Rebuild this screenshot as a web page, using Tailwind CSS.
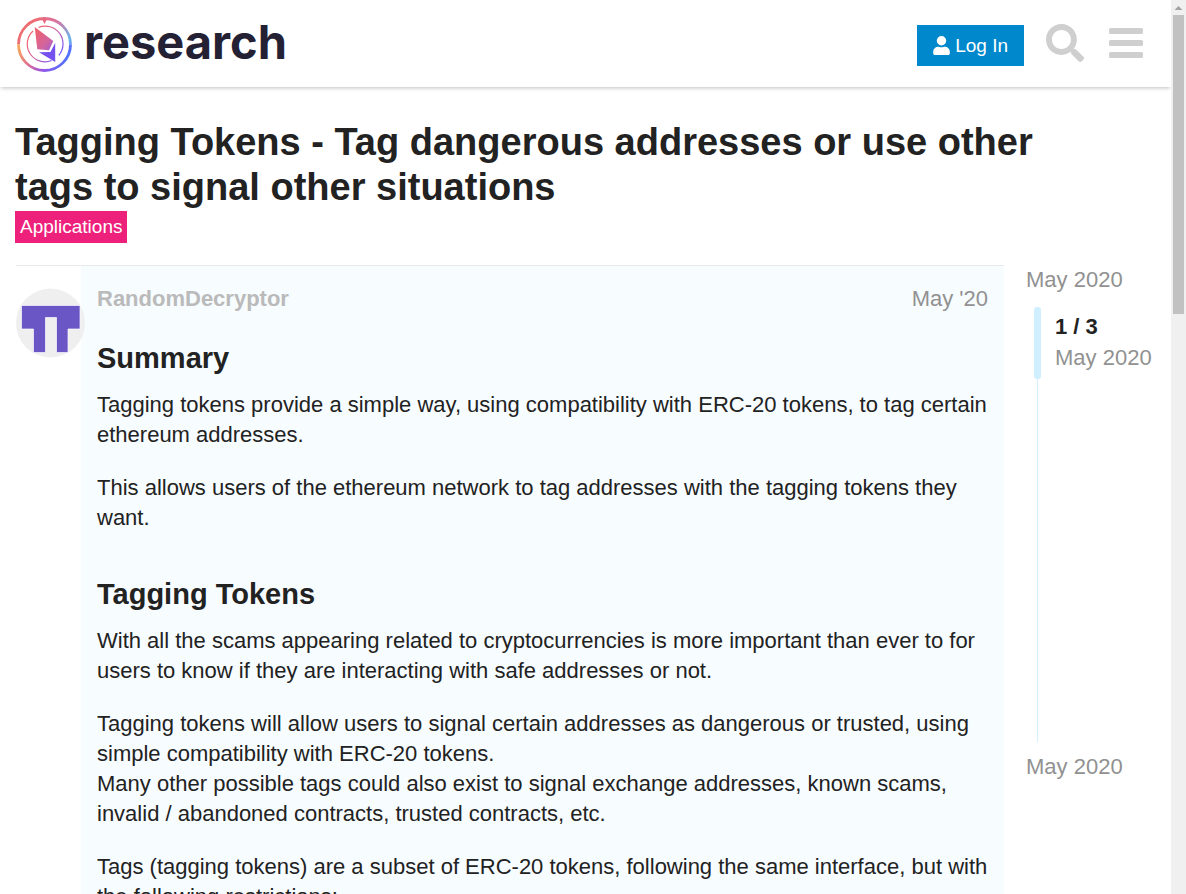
<!DOCTYPE html>
<html lang="en">
<head>
<meta charset="utf-8">
<meta name="viewport" content="width=device-width, initial-scale=1">
<title>Tagging Tokens - research</title>
<script src="https://cdn.jsdelivr.net/npm/@tailwindcss/browser@4"></script>
</head>
<body class="flex h-screen overflow-hidden bg-white font-['Liberation_Sans',Arial,sans-serif] text-[22px] leading-[30px] text-[#222222]">
<div class="min-w-0 flex-1 overflow-hidden">
  <header class="flex h-[87px] items-center justify-between pr-[27px] pl-4 shadow-[0_2px_4px_-1px_rgba(0,0,0,0.25)]">
    <a href="#" class="flex items-center gap-[11px] pt-px" aria-label="research">
      <svg class="size-[57px]" viewBox="0 0 57 57" fill="none" aria-hidden="true">
        <defs>
          <linearGradient id="ring" x1="6" y1="6" x2="52" y2="44" gradientUnits="userSpaceOnUse">
            <stop offset="0" stop-color="#f56a60"/><stop offset=".45" stop-color="#d873a2"/><stop offset=".8" stop-color="#69b5ec"/><stop offset="1" stop-color="#5d72ff"/>
          </linearGradient>
          <linearGradient id="low" x1="2" y1="28" x2="50" y2="48" gradientUnits="userSpaceOnUse">
            <stop offset="0" stop-color="#f7ae59"/><stop offset=".3" stop-color="#e5748b"/><stop offset=".62" stop-color="#9755e4"/><stop offset="1" stop-color="#4e73ff"/>
          </linearGradient>
          <linearGradient id="gem" x1="18" y1="17" x2="43" y2="38" gradientUnits="userSpaceOnUse">
            <stop offset="0" stop-color="#f0616d"/><stop offset=".5" stop-color="#d065a1"/><stop offset="1" stop-color="#7652fa"/>
          </linearGradient>
        </defs>
        <path d="M2.500 28.500a26 26 0 0 1 52 0" stroke="url(#ring)" stroke-width="2.800"/>
        <path d="M2.500 28.500a26 26 0 0 0 52 0" stroke="url(#low)" stroke-width="2.800"/>
        <path d="M26 3h5l-2.500 5z" fill="#e9647e"/>
        <path d="M22.500 11.500A17.700 17.700 0 0 1 42.800 39.300M35.500 44.500A17.700 17.700 0 0 1 17 15" stroke="url(#gem)" stroke-width="1.200"/>
        <path d="M18.700 11 37.300 25 33 34.300 21.300 33.300z" fill="url(#gem)"/>
        <path d="M23 36.300 34.500 36 39.200 26.700V46z" fill="#7552ef"/>
      </svg>
      <span class="pb-1 font-[Inter] text-[47px] leading-[56px] font-bold text-[#242135]">research</span>
    </a>
    <div class="flex items-center">
      <button class="mt-1 flex h-[41px] items-center gap-[5px] bg-[#0088cc] px-4 text-[19px] leading-6 text-white">
        <svg class="h-[19px] w-[17px]" viewBox="0 0 448 512" fill="currentColor" aria-hidden="true"><path d="M224 256a128 128 0 1 0 0-256 128 128 0 0 0 0 256zm89.600 32h-16.700a174 174 0 0 1-145.800 0h-16.700A134.400 134.400 0 0 0 0 422.400V464c0 26.500 21.500 48 48 48h352c26.500 0 48-21.500 48-48v-41.600A134.400 134.400 0 0 0 313.600 288z"/></svg>
        Log In
      </button>
      <button aria-label="Search" class="mb-0.5 ml-[22px] text-[#cfcfcf]">
        <svg class="size-[38px]" viewBox="0 0 512 512" fill="currentColor" aria-hidden="true"><path d="M505 442.700 405.300 343c-4.500-4.500-10.600-7-17-7H372c27.600-35.300 44-79.700 44-128C416 93.100 322.900 0 208 0S0 93.100 0 208s93.100 208 208 208c48.300 0 92.700-16.400 128-44v16.300c0 6.400 2.500 12.500 7 17l99.700 99.700c9.400 9.400 24.600 9.400 33.900 0l28.300-28.300c9.400-9.400 9.400-24.600.100-34zM208 336c-70.700 0-128-57.200-128-128 0-70.700 57.200-128 128-128 70.700 0 128 57.200 128 128 0 70.700-57.200 128-128 128z"/></svg>
      </button>
      <button aria-label="Menu" class="mb-0.5 ml-6 text-[#cfcfcf]">
        <svg class="h-[38px] w-[36px]" viewBox="0 0 36 38" fill="currentColor" aria-hidden="true"><rect x="1" y="4" width="34" height="6" rx="1.500"/><rect x="1" y="16" width="34" height="6" rx="1.500"/><rect x="1" y="28" width="34" height="6" rx="1.500"/></svg>
      </button>
    </div>
  </header>

  <main>
    <div class="px-[15px] pt-[33px] pb-[22px]">
      <h1 class="max-w-[1060px] text-[38px] leading-[45px] font-bold">Tagging Tokens - Tag dangerous addresses or use other tags to signal other situations</h1>
      <a href="#" class="mt-px flex h-8 w-fit items-center bg-[#ed207b] px-[5px] text-[19px] text-white">Applications</a>
    </div>
    <div class="flex pl-4">
      <article class="flex min-w-0 flex-1 border-t border-[#e9e9e9]">
        <div class="w-[65px] shrink-0 pt-[22px]">
          <svg class="relative size-[70px] max-w-none" viewBox="0 0 70 70" role="img" aria-label="RandomDecryptor avatar"><circle cx="34.500" cy="35" r="34.500" fill="#efefef"/><path d="M5.500 17.500h58.500V41H52v23.500H40.500V29.500h-11v35h-12V41h-12z" fill="#6a57c5" stroke="#faf9ff" stroke-width=".7"/></svg>
        </div>
        <div class="min-w-0 flex-1 bg-[#f7fcff] px-4 pt-[18px]">
          <div class="flex justify-between">
            <a href="#" class="font-bold text-[#bababa]">RandomDecryptor</a>
            <a href="#" class="text-[#919191]">May '20</a>
          </div>
          <h2 class="mt-[26px] text-[29px] leading-[36px] font-bold">Summary</h2>
          <p class="mt-[14px]">Tagging tokens provide a simple way, using compatibility with ERC-20 tokens, to tag certain ethereum addresses.</p>
          <p class="mt-[23px]">This allows users of the ethereum network to tag addresses with the tagging tokens they want.</p>
          <h2 class="mt-[43px] text-[29px] leading-[36px] font-bold">Tagging Tokens</h2>
          <p class="mt-[14px]">With all the scams appearing related to cryptocurrencies is more important than ever to for users to know if they are interacting with safe addresses or not.</p>
          <p class="mt-[23px]">Tagging tokens will allow users to signal certain addresses as dangerous or trusted, using simple compatibility with ERC-20 tokens.<br>Many other possible tags could also exist to signal exchange addresses, known scams, invalid / abandoned contracts, trusted contracts, etc.</p>
          <p class="mt-[23px]">Tags (tagging tokens) are a subset of ERC-20 tokens, following the same interface, but with the following restrictions:</p>
        </div>
      </article>
      <aside class="w-[167px] shrink-0 pl-[22px] text-[#919191]">
        <a href="#" class="block">May 2020</a>
        <div class="mt-3 ml-2 flex h-[435px]">
          <div class="flex w-[7px] flex-col items-center">
            <div class="h-[72px] w-[7px] rounded-[3px] bg-[#d1f0ff]"></div>
            <div class="w-px flex-1 bg-[#d1f0ff]"></div>
          </div>
          <div class="flex flex-col gap-px pt-[5px] pl-[14px] whitespace-nowrap">
            <div class="font-bold text-[#222222]">1 / 3</div>
            <div>May 2020</div>
          </div>
        </div>
        <a href="#" class="mt-[10px] block">May 2020</a>
      </aside>
    </div>
  </main>
</div>
<div class="flex w-[15px] shrink-0 flex-col items-center bg-[#f0f0f0]" aria-hidden="true">
  <svg class="size-[15px]" viewBox="0 0 15 15"><path d="M3.500 10h8l-4-4z" fill="#a3a3a3"/></svg>
  <div class="h-[299px] w-[11px] bg-[#c1c1c1]"></div>
</div>
</body>
</html>
